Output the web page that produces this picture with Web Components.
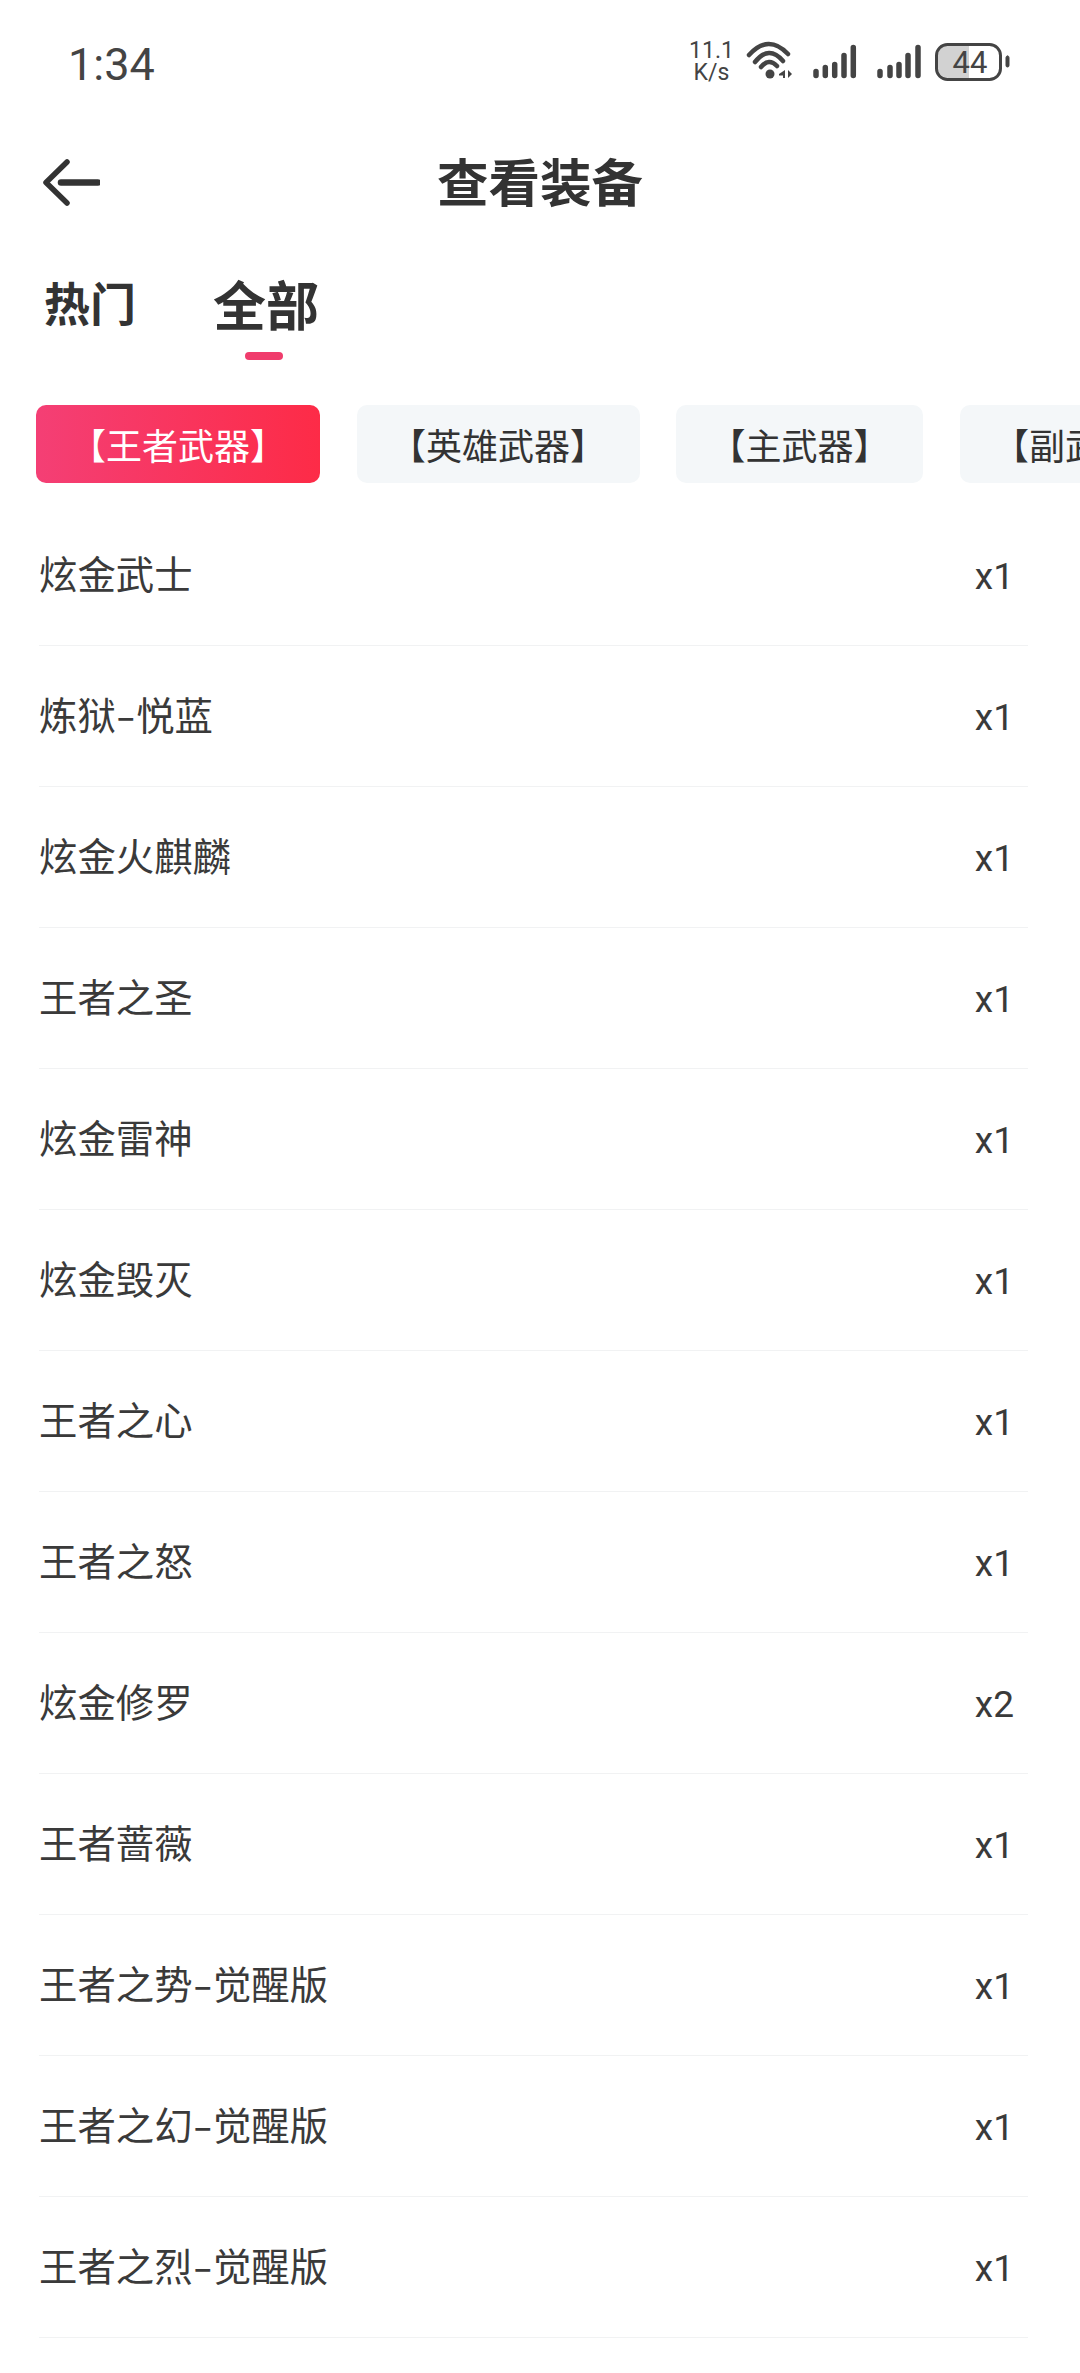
<!DOCTYPE html>
<html lang="zh">
<head>
<meta charset="utf-8">
<title>查看装备</title>
<style>
  html, body { margin: 0; padding: 0; background: #fff; }
  body { width: 1080px; height: 2373px; overflow: hidden; font-family: "Noto Sans CJK SC", "Noto Sans", sans-serif; color: #333; }
</style>
</head>
<body>
<status-bar></status-bar>
<top-bar>查看装备</top-bar>
<main-tabs></main-tabs>
<chip-row></chip-row>
<gear-list></gear-list>

<script>
class StatusBar extends HTMLElement {
    connectedCallback() {
        this.attachShadow({ mode: 'open' });
        this.shadowRoot.innerHTML = `
            <style>
                :host { display: flex; height: 124px; box-sizing: border-box; padding: 0 68.500px 0 68px; color: #444; }
                .time { font: 400 45px/56px Roboto, sans-serif; margin-top: 37px; }
                .speed { font: 400 23px/22px Roboto, sans-serif; text-align: center; width: 46px; margin: 40px 7px 0 auto; }
                svg { display: block; margin-top: 40px; }
                text { font: 400 31px Roboto, sans-serif; fill: #444; stroke: none; }
            </style>
            <div class="time">1:34</div>
            <div class="speed">11.1<br>K/s</div>
            <svg width="270" height="45" viewBox="0 0 270 45" fill="none" stroke="#444" stroke-linecap="round">
                <g stroke-width="4.5">
                    <path d="M7 15Q26.5 -6.5 46 14"/>
                    <path d="M13 22Q27 4.5 41 21"/>
                    <path d="M19 27Q27 17.5 35 26"/>
                </g>
                <circle cx="28" cy="34" r="4.5" fill="#444" stroke="none"/>
                <path d="M43 30v8h-2v-2.500h-4v-1.500zM46 30v8l4 -4z" fill="#444" stroke="none"/>
                <g stroke-width="5.500">
                    <path d="M74 35.500v-4M83.300 35.500v-8M92.700 35.500v-11M102 35.500v-20M111.300 35.500v-28"/>
                    <path d="M138 35.500v-4M148 35.500v-8M157 35.500v-11M166 35.500v-20M176 35.500v-28"/>
                </g>
                <path d="M206 5h21v33h-21a10 10 0 0 1 -10 -10v-13a10 10 0 0 1 10 -10z" fill="#d2d2d2" stroke="none"/>
                <rect x="194.500" y="4.500" width="64" height="35" rx="11" stroke-width="3"/>
                <rect x="264" y="16" width="3" height="11" rx="1.500" fill="#444" stroke-width="1"/>
                <text x="228" y="33" text-anchor="middle">44</text>
            </svg>
        `;
    }
}

class TopBar extends HTMLElement {
    connectedCallback() {
        this.attachShadow({ mode: 'open' });
        this.shadowRoot.innerHTML = `
            <style>
                :host { display: grid; grid-template-columns: 1fr auto 1fr; align-items: center; height: 118px; padding-left: 40px; box-sizing: border-box; }
                .title { font-size: 51.500px; font-weight: 700; line-height: 106px; margin-top: -6px; color: #333; margin-left: -40px; }
                svg { display: block; }
            </style>
            <svg width="60" height="56" viewBox="0 0 60 56" fill="none" stroke="#333" stroke-linecap="round" stroke-linejoin="round">
                <path d="M27 7L6 27.500L27 48" stroke-width="5.500"/>
                <path d="M21 27.500H58" stroke-width="6.500"/>
            </svg>
            <div class="title"><slot></slot></div>
            <div></div>
        `;
    }
}

class MainTabs extends HTMLElement {
    connectedCallback() {
        this.attachShadow({ mode: 'open' });
        this.shadowRoot.innerHTML = `
            <style>
                :host { display: flex; height: 163px; box-sizing: border-box; padding: 24px 0 0 44px; gap: 77px; align-items: flex-start; }
                .tab { font-weight: 700; color: #333; font-size: 46px; line-height: 70px; }
                .active { position: relative; font-size: 53px; line-height: 72px; margin-top: 1px; }
                .active::after { content: ""; position: absolute; left: 32px; bottom: -21px; width: 38px; height: 8px; border-radius: 4px; background: #f03c6c; }
            </style>
            <div class="tab">热门</div>
            <div class="tab active">全部</div>
        `;
    }
}

class ChipRow extends HTMLElement {
    connectedCallback() {
        this.attachShadow({ mode: 'open' });
        this.shadowRoot.innerHTML = `
            <style>
                :host { display: flex; gap: 36.500px; padding-left: 36px; height: 78px; overflow: hidden; }
                .chip { flex: none; box-sizing: border-box; height: 78px; border-radius: 10px; background: #f4f7f9; color: #333; font-size: 36px; line-height: 78px; text-align: center; white-space: nowrap; }
                .on { background: linear-gradient(90deg, #f43f75, #fd2b47); color: #fff; }
            </style>
            <div class="chip on" style="width:284px">【王者武器】</div>
            <div class="chip" style="width:283px">【英雄武器】</div>
            <div class="chip" style="width:247px">【主武器】</div>
            <div class="chip" style="width:247px">【副武器】</div>
        `;
    }
}

class GearList extends HTMLElement {
    connectedCallback() {
        this.attachShadow({ mode: 'open' });
        const items = [
            ['炫金武士', 'x1'], ['炼狱-悦蓝', 'x1'], ['炫金火麒麟', 'x1'], ['王者之圣', 'x1'],
            ['炫金雷神', 'x1'], ['炫金毁灭', 'x1'], ['王者之心', 'x1'], ['王者之怒', 'x1'],
            ['炫金修罗', 'x2'], ['王者蔷薇', 'x1'], ['王者之势-觉醒版', 'x1'],
            ['王者之幻-觉醒版', 'x1'], ['王者之烈-觉醒版', 'x1'],
        ];
        const rows = items.map(([name, n]) => {
            const label = name.replace('-', '<i>-</i>');
            return `<div class="row"><span>${label}</span><span class="n">${n}</span></div>`;
        }).join('');
        this.shadowRoot.innerHTML = `
            <style>
                :host { display: block; margin: 0 52px 0 39px; padding-top: 22px; }
                .row { display: flex; justify-content: space-between; align-items: center; box-sizing: border-box; height: 141px; border-bottom: 1.500px solid #f1f2f3; padding: 0 14px 6px 0; font-size: 38.400px; color: #3a3a3a; }
                i { font-style: normal; display: inline-block; margin: 0 3.500px; transform: scaleX(1.5); }
                .n { font: 400 37px Roboto, sans-serif; margin-top: 8px; }
            </style>
            ${rows}
        `;
    }
}

customElements.define('status-bar', StatusBar);
customElements.define('top-bar', TopBar);
customElements.define('main-tabs', MainTabs);
customElements.define('chip-row', ChipRow);
customElements.define('gear-list', GearList);
</script>
</body>
</html>
